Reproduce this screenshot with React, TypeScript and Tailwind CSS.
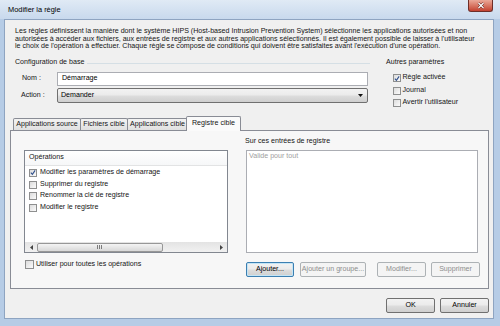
import clsx from "clsx";

const winBtn =
  "bg-[linear-gradient(#f2f2f2_0%,#ebebeb_48%,#dddddd_52%,#cfcfcf_100%)]";

function Check({ checked }: { checked?: boolean }) {
  return (
    <span className="w-[8px] h-[8px] shrink-0 border border-[#8e8f8f] bg-linear-to-br from-[#dcdcdc] to-[#fbfbfb] flex items-center justify-center">
      {checked && (
        <svg width="7" height="7" viewBox="0 0 7 7">
          <path d="M1 3.6 L2.8 5.6 L6 1" fill="none" stroke="#31518c" strokeWidth="1.3" />
        </svg>
      )}
    </span>
  );
}

function Btn({
  label,
  className,
  disabled,
  focus,
}: {
  label: string;
  className?: string;
  disabled?: boolean;
  focus?: boolean;
}) {
  return (
    <div
      className={clsx(
        "h-[15px] shrink-0 flex items-center justify-center rounded-[2px] border whitespace-nowrap",
        disabled
          ? "border-[#adb2b5] bg-[#f4f4f4] text-[#8d8d8d]"
          : focus
            ? clsx("border-[#3c7fb1] shadow-[inset_0_0_0_1px_#c4e5f6] text-black", winBtn)
            : clsx("border-[#707070] text-black", winBtn),
        className
      )}
    >
      {label}
    </div>
  );
}

function Tab({ label, active, className }: { label: string; active?: boolean; className?: string }) {
  return (
    <div
      className={clsx(
        "flex items-center justify-center whitespace-nowrap border border-b-0 border-[#898c95] rounded-t-[2px]",
        active
          ? "h-[15px] -mb-px relative z-10 bg-[#fafafa] -ml-[2px]"
          : "h-[12px] bg-linear-to-b from-[#f3f3f3] to-[#e0e0e0] -ml-px first:ml-0",
        className
      )}
    >
      {label}
    </div>
  );
}

const operations = [
  { label: "Modifier les paramètres de démarrage", checked: true },
  { label: "Supprimer du registre" },
  { label: "Renommer la clé de registre" },
  { label: "Modifier le registre" },
];

export default function App() {
  return (
    <div className="w-[500px] h-[326px] flex flex-col overflow-hidden bg-[#b6cce6] font-['Liberation_Sans',Arial,sans-serif] text-[7.1px] leading-[7.7px] text-[#151515]">
      {/* title bar */}
      <div className="h-[19px] shrink-0 flex items-start justify-between pl-[8px] pr-[7px] bg-linear-to-b from-[#e0eaf5] to-[#c8d9ed]">
        <span className="mt-[6px] text-[7.4px] text-black">Modifier la règle</span>
        <div className="w-[25px] h-[12px] rounded-b-[3px] border border-t-0 border-[#6e2e28] bg-linear-to-b from-[#eaa898] to-[#c3402f] flex items-center justify-center">
          <svg width="8" height="7" viewBox="0 0 8 7">
            <path d="M1.5 1 L6.5 6 M6.5 1 L1.5 6" stroke="#5a1d18" strokeWidth="2.4" />
            <path d="M1.5 1 L6.5 6 M6.5 1 L1.5 6" stroke="#fff" strokeWidth="1.3" />
          </svg>
        </div>
      </div>

      <div className="flex-1 flex pl-[4px] pr-[6px] pb-[7px]">
        <div className="flex-1 flex flex-col bg-[#f0f0f0] border border-[#8ea4c1]">
          {/* description */}
          <div className="pt-[8px] pl-[10px] whitespace-nowrap">
            <div>
              Les règles définissent la manière dont le système HIPS (Host-based Intrusion Prevention System) sélectionne les applications autorisées et non
            </div>
            <div>
              autorisées à accéder aux fichiers, aux entrées de registre et aux autres applications sélectionnés. Il est également possible de laisser à l'utilisateur
            </div>
            <div>
              le choix de l'opération à effectuer. Chaque règle se compose de conditions qui doivent être satisfaites avant l'exécution d'une opération.
            </div>
          </div>

          {/* configuration */}
          <div className="mt-[8px] h-[48px] pl-[10px] flex">
            <div className="w-[355px] flex flex-col">
              <div className="h-[8px] flex items-center gap-[3px]">
                <span>Configuration de base</span>
                <span className="flex-1 h-px bg-[#d5dfe5]" />
              </div>
              <div className="mt-[5px] flex items-center">
                <span className="w-[42px] pl-[7px]">Nom :</span>
                <div className="w-[311px] h-[14px] border border-[#abadb3] bg-white flex items-center pl-[4px] text-black">
                  Démarrage
                </div>
              </div>
              <div className="mt-[2px] flex items-center">
                <span className="w-[42px] pl-[6px]">Action :</span>
                <div
                  className={clsx(
                    "w-[311px] h-[15px] border border-[#707070] rounded-[2px] flex items-center justify-between pl-[3px] pr-[4px] text-black",
                    winBtn
                  )}
                >
                  <span>Demander</span>
                  <svg width="5" height="3" viewBox="0 0 5 3">
                    <path d="M0 0 H5 L2.5 3 Z" fill="#111" />
                  </svg>
                </div>
              </div>
            </div>

            <div className="ml-[16px] flex flex-col">
              <div className="h-[8px] flex items-center">Autres paramètres</div>
              <div className="mt-[7px] ml-[7px] flex flex-col gap-[4.5px]">
                <div className="flex items-center gap-[1.5px]">
                  <Check checked />
                  <span>Règle activée</span>
                </div>
                <div className="flex items-center gap-[1.5px]">
                  <Check />
                  <span>Journal</span>
                </div>
                <div className="flex items-center gap-[1.5px]">
                  <Check />
                  <span>Avertir l'utilisateur</span>
                </div>
              </div>
            </div>
          </div>

          {/* tabs */}
          <div className="mt-[9px] ml-[5px] w-[479px] flex flex-col">
            <div className="h-[14px] flex items-end pl-[3px]">
              <Tab label="Applications source" className="w-[68px]" />
              <Tab label="Fichiers cible" className="w-[48px]" />
              <Tab label="Applications cible" className="w-[61px]" />
              <Tab label="Registre cible" active className="w-[55px]" />
            </div>
            <div className="h-[159px] border border-[#898c95] bg-[#f7f7f7] pt-[7px] pl-[13px] flex gap-[18px]">
              {/* operations */}
              <div className="w-[204px] flex flex-col">
                <div className="mt-[12px] h-[103px] border border-[#828790] bg-white flex flex-col">
                  <div className="h-[15px] flex items-center pl-[4px] border-b border-[#e2e3e4] bg-linear-to-b from-white to-[#f6f7f8]">
                    Opérations
                  </div>
                  <div className="pt-[1px] flex flex-col">
                    {operations.map((op) => (
                      <div key={op.label} className="h-[11.6px] flex items-center gap-[3px] pl-[4px]">
                        <Check checked={op.checked} />
                        <span>{op.label}</span>
                      </div>
                    ))}
                  </div>
                  <div className="mt-auto h-[10px] flex items-center bg-linear-to-b from-[#e3e3e3] to-[#f1f1f1]">
                    <div className="w-[12px] flex justify-center">
                      <svg width="3" height="5" viewBox="0 0 3 5">
                        <path d="M3 0 V5 L0 2.5 Z" fill="#444" />
                      </svg>
                    </div>
                    <div className="w-[126px] h-[9px] rounded-[2px] border border-[#979797] flex items-center justify-center bg-linear-to-b from-[#f4f4f4] to-[#d8d8d8]">
                      <svg width="6" height="4" viewBox="0 0 6 4">
                        <path d="M0.5 0 V4 M2.5 0 V4 M4.5 0 V4" stroke="#7c7c7c" strokeWidth="1" />
                      </svg>
                    </div>
                    <div className="flex-1" />
                    <div className="w-[12px] flex justify-center">
                      <svg width="3" height="5" viewBox="0 0 3 5">
                        <path d="M0 0 V5 L3 2.5 Z" fill="#444" />
                      </svg>
                    </div>
                  </div>
                </div>
                <div className="mt-[7px] ml-[1px] flex items-center gap-[2px]">
                  <span className="w-[9px] h-[9px] shrink-0 border border-[#8e8f8f] bg-linear-to-br from-[#dcdcdc] to-[#fbfbfb]" />
                  <span>Utiliser pour toutes les opérations</span>
                </div>
              </div>

              {/* registry entries */}
              <div className="w-[234px] flex flex-col">
                <div className="h-[8px] flex items-center -ml-px">Sur ces entrées de registre</div>
                <div className="mt-[4px] w-[232px] h-[103px] border border-[#abadb3] bg-white pl-[2px] pt-[2px] text-[#a0a0a0]">
                  Valide pour tout
                </div>
                <div className="mt-[9px] flex">
                  <Btn label="Ajouter..." focus className="w-[48px]" />
                  <Btn label="Ajouter un groupe..." disabled className="ml-[6px] w-[66px]" />
                  <Btn label="Modifier..." disabled className="ml-[11px] w-[49px]" />
                  <Btn label="Supprimer" disabled className="ml-[5px] w-[49px]" />
                </div>
              </div>
            </div>
          </div>

          {/* dialog buttons */}
          <div className="mt-[9px] pr-[4px] flex justify-end gap-[5px]">
            <Btn label="OK" className="w-[49px]" />
            <Btn label="Annuler" className="w-[49px]" />
          </div>
        </div>
      </div>
    </div>
  );
}
